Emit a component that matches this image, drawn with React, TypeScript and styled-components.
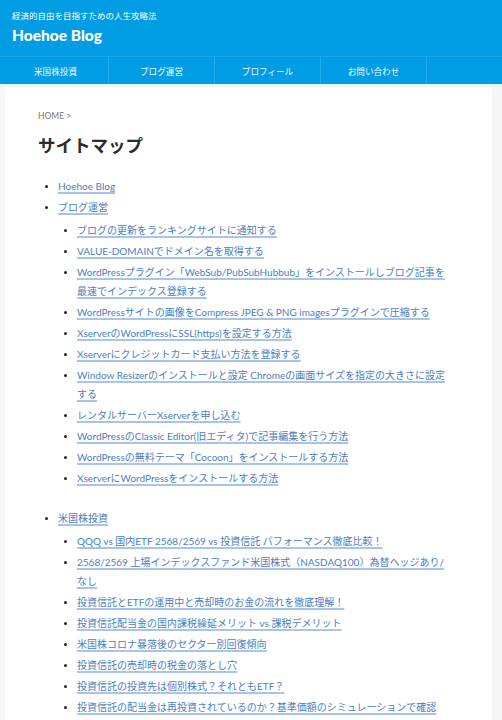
import React from "react";
import styled, { createGlobalStyle } from "styled-components";

const GlobalStyle = createGlobalStyle`
  body {
    margin: 0;
    background: #f7f7f7;
    font-family: "Noto Sans CJK JP", "Noto Sans", sans-serif;
    color: #333;
  }
`;

const Header = styled.header`
  background: #019de4;
  color: #fff;
  padding: 8px 12px 0;
  height: 48px;
`;

const Tagline = styled.div`
  font-size: 8.5px;
  line-height: 14px;
`;

const SiteTitle = styled.div`
  font-family: "Lato", "Noto Sans", sans-serif;
  font-weight: 900;
  font-size: 15.5px;
  line-height: 20px;
  margin-top: 3px;
`;

const Nav = styled.nav`
  background: #019de4;
  border-top: 1px solid #1aa7e8;
  display: flex;
  height: 27px;
  padding-left: 3px;
  border-bottom: 3px solid #e9f5fc;
`;

const NavItem = styled.a`
  width: 105px;
  border-right: 1px solid #1eabec;
  display: flex;
  align-items: center;
  justify-content: center;
  color: #f2f9fd;
  font-size: 8.6px;
  text-decoration: none;
`;

const Card = styled.main`
  background: #fff;
  margin: 0 10px 0 5px;
  padding: 23px 33px 30px;
`;

const Breadcrumb = styled.div`
  font-family: "Lato", "Noto Sans CJK JP", sans-serif;
  font-size: 8.5px;
  line-height: 12px;
  color: #777;
`;

const Title = styled.h1`
  font-size: 17.5px;
  font-weight: 700;
  line-height: 24px;
  margin: 11px 0 20px;
  color: #2b2b2b;
`;

const List = styled.ul<{ $nested?: boolean }>`
  margin: ${(p) => (p.$nested ? "4px 0 21px" : "0")};
  padding-left: ${(p) => (p.$nested ? "19px" : "20px")};
  list-style: disc;
  font-family: "Lato", "Noto Sans CJK JP", sans-serif;
  font-size: 10px;
  line-height: 19px;
  max-width: 388px;
`;

const Item = styled.li`
  margin-bottom: 2px;
  &::marker {
    color: #222;
    font-size: 9px;
  }
`;

const Link = styled.a`
  color: #4d7ebf;
  text-decoration: underline;
  text-decoration-color: #a7c5e8;
  text-decoration-thickness: 1.5px;
  text-underline-offset: 2px;
`;

const navItems = ["米国株投資", "ブログ運営", "プロフィール", "お問い合わせ"];

const blogPosts = [
  "ブログの更新をランキングサイトに通知する",
  "VALUE-DOMAINでドメイン名を取得する",
  "WordPressプラグイン「WebSub/PubSubHubbub」をインストールしブログ記事を最速でインデックス登録する",
  "WordPressサイトの画像をCompress JPEG & PNG imagesプラグインで圧縮する",
  "XserverのWordPressにSSL(https)を設定する方法",
  "Xserverにクレジットカード支払い方法を登録する",
  "Window Resizerのインストールと設定 Chromeの画面サイズを指定の大きさに設定する",
  "レンタルサーバーXserverを申し込む",
  "WordPressのClassic Editor(旧エディタ)で記事編集を行う方法",
  "WordPressの無料テーマ「Cocoon」をインストールする方法",
  "XserverにWordPressをインストールする方法",
];

const stockPosts = [
  "QQQ vs 国内ETF 2568/2569 vs 投資信託 パフォーマンス徹底比較！",
  "2568/2569 上場インデックスファンド米国株式（NASDAQ100）為替ヘッジあり/なし",
  "投資信託とETFの運用中と売却時のお金の流れを徹底理解！",
  "投資信託配当金の国内課税繰延メリット vs 課税デメリット",
  "米国株コロナ暴落後のセクター別回復傾向",
  "投資信託の売却時の税金の落とし穴",
  "投資信託の投資先は個別株式？それともETF？",
  "投資信託の配当金は再投資されているのか？基準価額のシミュレーションで確認",
];

const App: React.FC = () => {
  return (
    <>
      <GlobalStyle />
      <Header>
        <Tagline>経済的自由を目指すための人生攻略法</Tagline>
        <SiteTitle>Hoehoe Blog</SiteTitle>
      </Header>
      <Nav>
        {navItems.map((item) => (
          <NavItem key={item} href="#">
            {item}
          </NavItem>
        ))}
      </Nav>
      <Card>
        <Breadcrumb>HOME &gt;</Breadcrumb>
        <Title>サイトマップ</Title>
        <List>
          <Item>
            <Link href="#">Hoehoe Blog</Link>
          </Item>
          <Item>
            <Link href="#">ブログ運営</Link>
            <List $nested>
              {blogPosts.map((p) => (
                <Item key={p}>
                  <Link href="#">{p}</Link>
                </Item>
              ))}
            </List>
          </Item>
          <Item>
            <Link href="#">米国株投資</Link>
            <List $nested>
              {stockPosts.map((p) => (
                <Item key={p}>
                  <Link href="#">{p}</Link>
                </Item>
              ))}
            </List>
          </Item>
        </List>
      </Card>
    </>
  );
};

export default App;
